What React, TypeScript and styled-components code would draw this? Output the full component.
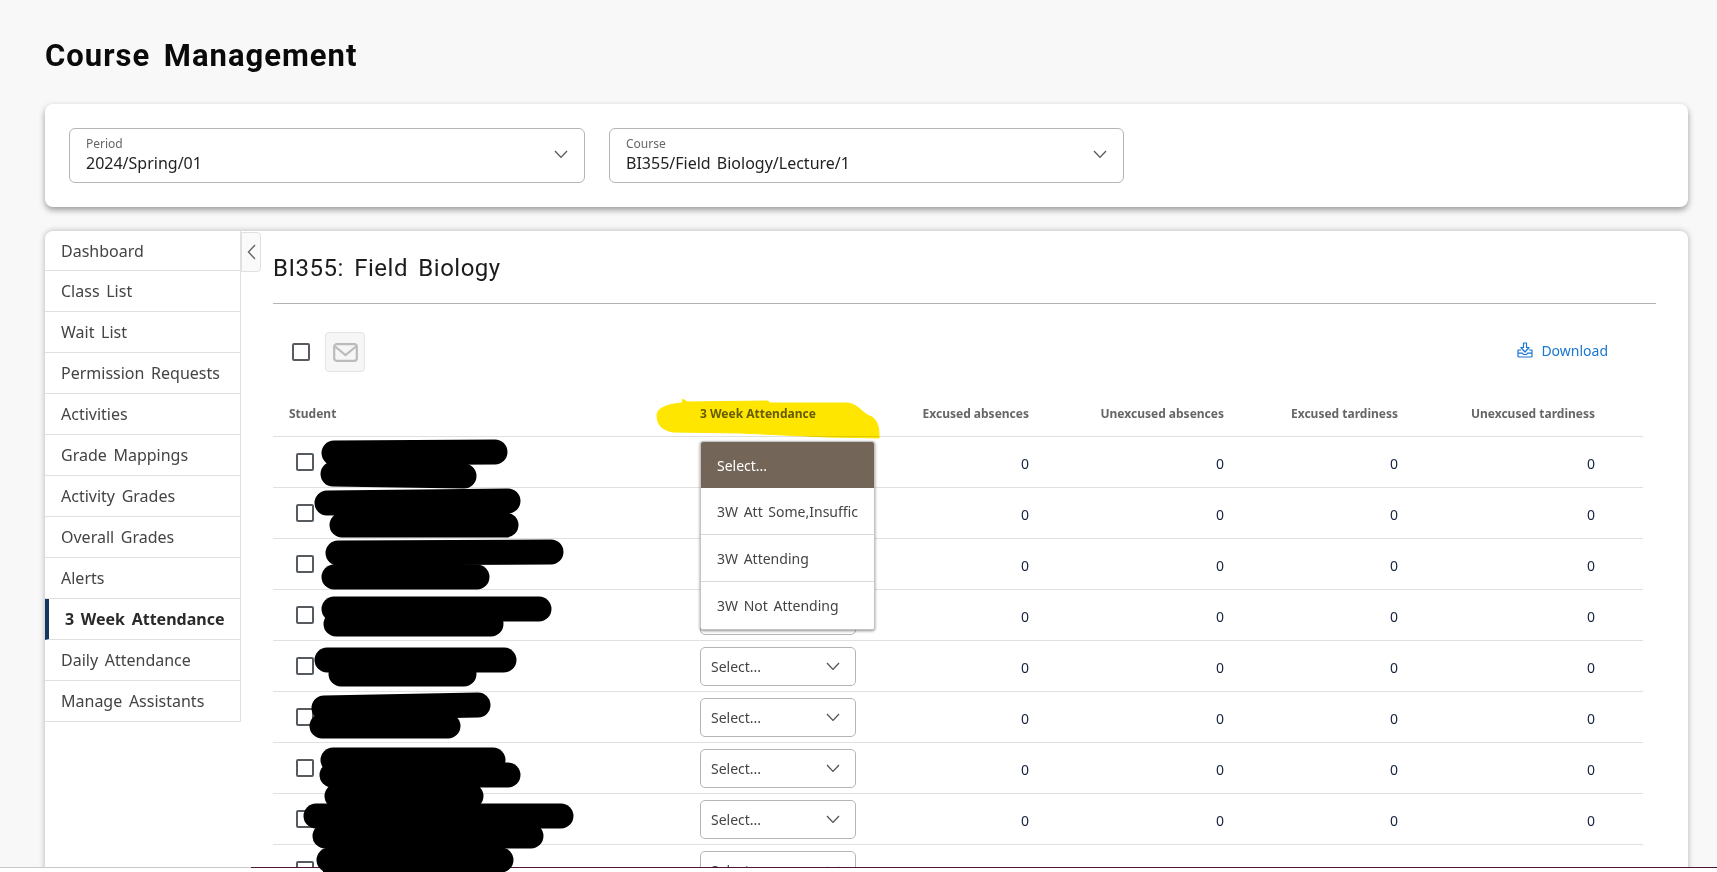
import React from "react";
import styled, { createGlobalStyle } from "styled-components";

const Global = createGlobalStyle`
  html, body { margin: 0; padding: 0; height: 100%; background: #f8f8f8; }
  body { font-family: "Noto Sans", "Open Sans", sans-serif; color: #333; }
  * { box-sizing: border-box; }
`;

const Shell = styled.div`
  position: relative;
  height: 100vh;
  display: flex;
  flex-direction: column;
  overflow: hidden;
`;
const Main = styled.main`
  flex: 1;
  min-height: 0;
  overflow: hidden;
  padding: 0 29px 0 45px;
`;
const PageTitle = styled.h1`
  margin: 0;
  padding-top: 38px;
  height: 104px;
  font: 700 31px/36px Roboto, sans-serif;
  letter-spacing: 1px;
  word-spacing: 5px;
  color: #0a0a0a;
`;
const FilterCard = styled.section`
  height: 103px;
  background: #fff;
  border-radius: 8px;
  box-shadow: 0 3px 6px rgba(0, 0, 0, 0.38);
  padding: 24px 24px;
  display: flex;
  gap: 24px;
`;
const FilterSelect = styled.div`
  width: ${(p: { $w: number }) => p.$w}px;
  height: 55px;
  border: 1px solid #b5b5b5;
  border-radius: 6px;
  padding: 5px 16px 7px 16px;
  display: flex;
  align-items: center;
  justify-content: space-between;
`;
const FilterLabel = styled.div`
  font-size: 12px;
  line-height: 16px;
  color: #666;
`;
const FilterValue = styled.div`
  font-size: 16px;
  line-height: 22px;
  color: #222;
  word-spacing: 2px;
`;
const ContentCard = styled.section`
  margin-top: 24px;
  height: 800px;
  background: #fff;
  border-radius: 8px;
  box-shadow: 0 0 6px rgba(0, 0, 0, 0.28);
  display: flex;
  align-items: flex-start;
  position: relative;
`;
const Nav = styled.nav`
  width: 196px;
  flex: none;
`;
const NavItem = styled.div<{ $active?: boolean }>`
  height: 41px;
  display: flex;
  align-items: center;
  padding-left: 16px;
  border-right: 1px solid #e0e0e0;
  border-bottom: 1px solid #e0e0e0;
  border-left: ${(p) => (p.$active ? "4px solid #17365f" : "none")};
  font-size: 16px;
  font-weight: ${(p) => (p.$active ? 700 : 400)};
  color: ${(p) => (p.$active ? "#2a2a2a" : "#444")};
  word-spacing: 2.5px;
  white-space: nowrap;
  &:first-child { height: 40px; }
`;
const CollapseTab = styled.button`
  position: absolute;
  left: 196px;
  top: 1px;
  width: 20px;
  height: 40px;
  padding: 0;
  border: 1px solid #e0e0e0;
  border-radius: 0 4px 4px 0;
  background: #fafafa;
  display: flex;
  align-items: center;
  justify-content: center;
`;
const Panel = styled.div`
  flex: 1;
  min-width: 0;
  padding: 0 32px;
`;
const PanelTitle = styled.h2`
  margin: 0;
  padding: 21px 0 19px;
  font: 400 24px/32px Roboto, sans-serif;
  letter-spacing: 0.5px;
  word-spacing: 4px;
  color: #1c1c1c;
  border-bottom: 1px solid #b3b3b3;
`;
const Toolbar = styled.div`
  margin-top: 28px;
  height: 40px;
  display: flex;
  align-items: center;
  gap: 15px;
  padding: 0 48px 0 19px;
`;
const Box = styled.span`
  display: block;
  flex: none;
  width: 18px;
  height: 18px;
  border: 2px solid #555b61;
  border-radius: 2px;
  background: #fff;
`;
const MailButton = styled.button`
  width: 40px;
  height: 40px;
  padding: 0;
  border: 1px solid #e4e4e4;
  border-radius: 4px;
  background: #f6f6f6;
  display: flex;
  align-items: center;
  justify-content: center;
`;
const DownloadLink = styled.a`
  margin-left: auto;
  margin-bottom: 4px;
  display: flex;
  align-items: center;
  gap: 8px;
  font-size: 14px;
  color: #1976d2;
`;
const Table = styled.div`
  margin-top: 18px;
  width: 1370px;
`;
const Row = styled.div<{ $head?: boolean }>`
  display: grid;
  grid-template-columns: 427px 160px 169px 195px 174px 197px 48px;
  align-items: center;
  height: ${(p) => (p.$head ? 47 : 51)}px;
  border-bottom: 1px solid #e0e0e0;
  font-size: ${(p) => (p.$head ? 12 : 14)}px;
  font-weight: ${(p) => (p.$head ? 700 : 400)};
  color: ${(p) => (p.$head ? "#666" : "#16233f")};
`;
const HeadName = styled.div`
  padding-left: 16px;
`;
const NameCell = styled.div`
  padding-left: 23px;
`;
const Num = styled.div`
  text-align: right;
  white-space: nowrap;
`;
const Count = styled(Num)`
  padding-top: 2px;
`;
const SelectCell = styled.div`
  position: relative;
`;
const RowSelect = styled.div`
  width: 156px;
  height: 39px;
  border: 1px solid #b5b5b5;
  border-radius: 5px;
  background: #fff;
  padding: 0 15px 0 10px;
  display: flex;
  align-items: center;
  justify-content: space-between;
  font-size: 14px;
  color: #444;
`;
const Menu = styled.div`
  position: absolute;
  left: 0;
  top: -2px;
  width: 175px;
  height: 189px;
  background: #fff;
  border: 1px solid #c4c4c4;
  border-radius: 3px;
  box-shadow: 0 1px 3px rgba(0, 0, 0, 0.45);
  overflow: hidden;
  z-index: 3;
`;
const MenuItem = styled.div<{ $selected?: boolean }>`
  height: ${(p) => (p.$selected ? 46 : 47)}px;
  padding: 1px 0 0 16px;
  display: flex;
  align-items: center;
  white-space: nowrap;
  overflow: hidden;
  font-size: 14px;
  word-spacing: 2px;
  background: ${(p) => (p.$selected ? "#736658" : "#fff")};
  color: ${(p) => (p.$selected ? "#fff" : "#444")};
  border-bottom: ${(p) => (p.$selected ? "none" : "1px solid #d8d8d8")};
  &:last-child { border-bottom: none; }
`;
const Footer = styled.footer`
  flex: none;
  height: 5px;
  background: #fff;
  display: flex;
`;
const FooterLeft = styled.div`
  width: 251px;
  border-top: 1px solid #c8c8c8;
`;
const FooterRight = styled.div`
  flex: 1;
  border-top: 1px solid #4a1738;
`;
const Overlay = styled.svg<{ $blend?: boolean }>`
  position: absolute;
  left: 0;
  top: 0;
  width: 1717px;
  height: 872px;
  pointer-events: none;
  z-index: 5;
  ${(p) => (p.$blend ? "mix-blend-mode: multiply;" : "")}
`;

const Chevron = ({ size = 14, color = "#555" }: { size?: number; color?: string }) => (
  <svg width={size} height={size * 0.6} viewBox="0 0 14 8.4" fill="none" stroke={color} strokeWidth="1.3">
    <path d="M1 1l6 6.4L13 1" />
  </svg>
);

const navItems = [
  "Dashboard", "Class List", "Wait List", "Permission Requests", "Activities",
  "Grade Mappings", "Activity Grades", "Overall Grades", "Alerts",
  "3 Week Attendance", "Daily Attendance", "Manage Assistants",
];

const strokes: [number, number, number, number][] = [
  [334, 453, 495, 452], [333, 474, 464, 476],
  [327, 503, 508, 501], [342, 525, 506, 525],
  [338, 553, 551, 552], [334, 577, 477, 577],
  [334, 609, 539, 609], [336, 624, 491, 624],
  [327, 660, 504, 660], [341, 674, 464, 674],
  [324, 708, 478, 705], [322, 726, 448, 726],
  [333, 760, 493, 760], [332, 775, 508, 775], [337, 796, 471, 796],
  [316, 816, 561, 816], [325, 836, 531, 836],
  [329, 860, 501, 860], [335, 868, 480, 868],
];

const rows = Array.from({ length: 9 });

export default function App() {
  return (
    <Shell>
      <Global />
      <Main>
        <PageTitle>Course Management</PageTitle>
        <FilterCard>
          <FilterSelect $w={516}>
            <div>
              <FilterLabel>Period</FilterLabel>
              <FilterValue>2024/Spring/01</FilterValue>
            </div>
            <Chevron />
          </FilterSelect>
          <FilterSelect $w={515}>
            <div>
              <FilterLabel>Course</FilterLabel>
              <FilterValue>BI355/Field Biology/Lecture/1</FilterValue>
            </div>
            <Chevron />
          </FilterSelect>
        </FilterCard>
        <ContentCard>
          <Nav>
            {navItems.map((n) => (
              <NavItem key={n} $active={n === "3 Week Attendance"}>{n}</NavItem>
            ))}
          </Nav>
          <CollapseTab aria-label="Collapse">
            <svg width="9" height="16" viewBox="0 0 9 16" fill="none" stroke="#666" strokeWidth="1.4">
              <path d="M8 1L1.5 8 8 15" />
            </svg>
          </CollapseTab>
          <Panel>
            <PanelTitle>BI355: Field Biology</PanelTitle>
            <Toolbar>
              <Box />
              <MailButton aria-label="Email">
                <svg width="25" height="19" viewBox="0 0 25 19" fill="none" stroke="#bbb" strokeWidth="2.2">
                  <rect x="1.2" y="1.2" width="22.6" height="16.6" rx="2.5" />
                  <path d="M2 3.5l10.5 8.5L23 3.5" />
                </svg>
              </MailButton>
              <DownloadLink>
                <svg width="16" height="16" viewBox="0 0 16 16" fill="none" stroke="#1976d2" strokeWidth="1.2" strokeLinejoin="round">
                  <path d="M6.5 1h3v4.5h2.6L8 10 3.9 5.5h2.6z" />
                  <path d="M4 8H1v6a1 1 0 0 0 1 1h12a1 1 0 0 0 1-1V8h-3M1 11.2h4.4l1 1.3h3.2l1-1.3H15" />
                </svg>
                Download
              </DownloadLink>
            </Toolbar>
            <Table>
              <Row $head>
                <HeadName>Student</HeadName>
                <div>3 Week Attendance</div>
                <Num>Excused absences</Num>
                <Num>Unexcused absences</Num>
                <Num>Excused tardiness</Num>
                <Num>Unexcused tardiness</Num>
              </Row>
              {rows.map((_, i) => (
                <Row key={i}>
                  <NameCell><Box /></NameCell>
                  <SelectCell>
                    <RowSelect>
                      Select...
                      <Chevron />
                    </RowSelect>
                    {i === 0 && (
                      <Menu>
                        <MenuItem $selected>Select...</MenuItem>
                        <MenuItem>3W Att Some,Insuffic</MenuItem>
                        <MenuItem>3W Attending</MenuItem>
                        <MenuItem>3W Not Attending</MenuItem>
                      </Menu>
                    )}
                  </SelectCell>
                  <Count>0</Count>
                  <Count>0</Count>
                  <Count>0</Count>
                  <Count>0</Count>
                </Row>
              ))}
            </Table>
          </Panel>
        </ContentCard>
      </Main>
      <Footer>
        <FooterLeft />
        <FooterRight />
      </Footer>
      <Overlay $blend viewBox="0 0 1717 872">
        <path
          d="M657 415C657 408 668 404 682 403L683 399 687 402 768 401 770 403 848 403C860 405 862 414 872 417C879 422 879 430 879 438L827 437 740 433 673 432C663 430 657 426 657 415Z"
          fill="#ffe600"
          stroke="#ffe600"
          strokeWidth="1"
          strokeLinejoin="round"
        />
      </Overlay>
      <Overlay viewBox="0 0 1717 872">
        {strokes.map(([x1, y1, x2, y2], i) => (
          <line key={i} x1={x1} y1={y1} x2={x2} y2={y2} stroke="#000" strokeWidth="25" strokeLinecap="round" />
        ))}
      </Overlay>
    </Shell>
  );
}
